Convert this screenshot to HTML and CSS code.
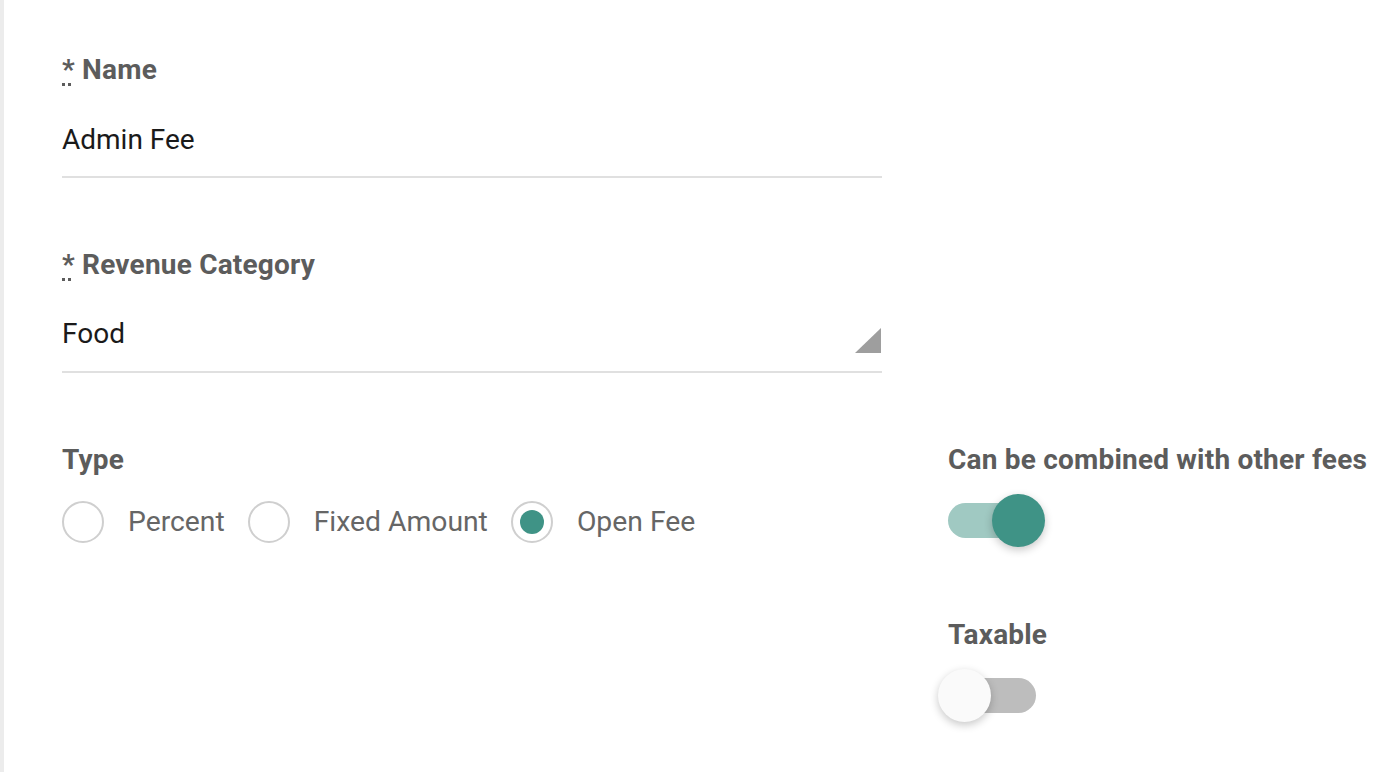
FILE: index.html
```html
<!DOCTYPE html>
<html lang="en">
<head>
    <meta charset="UTF-8">
    <meta name="viewport" content="width=device-width, initial-scale=1.0">
    <title>Edit Fee</title>
    <link rel="stylesheet" href="styles.css">
</head>
<body>
    <div class="page">
        <form class="fee-form">
            <div class="form-group">
                <label for="fee-name"><abbr title="required">*</abbr> Name</label>
                <input id="fee-name" type="text" value="Admin Fee">
            </div>

            <div class="form-group">
                <label for="revenue-category"><abbr title="required">*</abbr> Revenue Category</label>
                <div class="select-wrap">
                    <select id="revenue-category">
                        <option>Food</option>
                        <option>Beverage</option>
                        <option>Other</option>
                    </select>
                </div>
            </div>

            <div class="form-row">
                <div class="col-main">
                    <span class="group-label">Type</span>
                    <div class="radio-group">
                        <label class="radio"><span class="radio-dot"></span>Percent</label>
                        <label class="radio"><span class="radio-dot"></span>Fixed Amount</label>
                        <label class="radio checked"><span class="radio-dot"></span>Open Fee</label>
                    </div>
                </div>

                <div class="col-side">
                    <span class="group-label">Can be combined with other fees</span>
                    <div class="switch on"><span class="switch-thumb"></span></div>

                    <span class="group-label taxable">Taxable</span>
                    <div class="switch"><span class="switch-thumb"></span></div>
                </div>
            </div>
        </form>
    </div>
</body>
</html>
```

FILE: styles.css
```css
* {
    box-sizing: border-box;
}

body {
    margin: 0;
    font-family: Roboto, 'Liberation Sans', Arial, sans-serif;
    background-color: #fff;
    color: #5c5c5c;
}

.page {
    min-height: 100vh;
    border-left: 4px solid #ececec;
    padding: 53px 0 0 58px;
}

.form-group {
    width: 820px;
    margin-bottom: 70px;
}

.form-group label,
.group-label {
    display: block;
    font-size: 28px;
    font-weight: 700;
    letter-spacing: 0.2px;
    line-height: 34px;
    color: #5c5c5c;
}

abbr {
    text-decoration: underline dotted;
    text-decoration-thickness: 3px;
    text-underline-offset: 4px;
    cursor: help;
}

input,
select {
    display: block;
    width: 100%;
    height: 91px;
    padding: 35px 0 20px;
    border: none;
    border-bottom: 2px solid #e0e0e0;
    border-radius: 0;
    background: transparent;
    font-family: inherit;
    font-size: 28px;
    line-height: 34px;
    color: #1a1a1a;
    outline: none;
    appearance: none;
}

.select-wrap {
    position: relative;
}

.select-wrap::after {
    content: '';
    position: absolute;
    right: 1px;
    bottom: 20px;
    width: 26px;
    height: 25px;
    background-color: #9e9e9e;
    clip-path: polygon(100% 0, 100% 100%, 0 100%);
    pointer-events: none;
}

.form-row {
    display: flex;
}

.col-main {
    width: 820px;
}

.col-side {
    margin-left: 66px;
}

.radio-group {
    display: flex;
    align-items: center;
    gap: 23px;
    margin-top: 24px;
}

.radio {
    display: flex;
    align-items: center;
    gap: 24px;
    font-size: 28.3px;
    line-height: 42px;
    color: #666;
    cursor: pointer;
}

.radio-dot {
    display: flex;
    align-items: center;
    justify-content: center;
    width: 42px;
    height: 42px;
    border: 2px solid #cfcfcf;
    border-radius: 50%;
}

.radio.checked .radio-dot::after {
    content: '';
    width: 24px;
    height: 24px;
    border-radius: 50%;
    background-color: #3f9386;
}

.switch {
    position: relative;
    width: 88px;
    height: 35px;
    margin: 26px 0 0;
    border-radius: 18px;
    background-color: #bdbdbd;
    cursor: pointer;
}

.switch.on {
    background-color: #a0c9c2;
}

.switch-thumb {
    position: absolute;
    top: -9px;
    left: -10px;
    width: 53px;
    height: 53px;
    border-radius: 50%;
    background-color: #fafafa;
    box-shadow: 0 3px 8px rgba(0, 0, 0, 0.22);
}

.switch.on .switch-thumb {
    left: auto;
    right: -9px;
    background-color: #3f9386;
}

.group-label.taxable {
    margin-top: 80px;
}
```
